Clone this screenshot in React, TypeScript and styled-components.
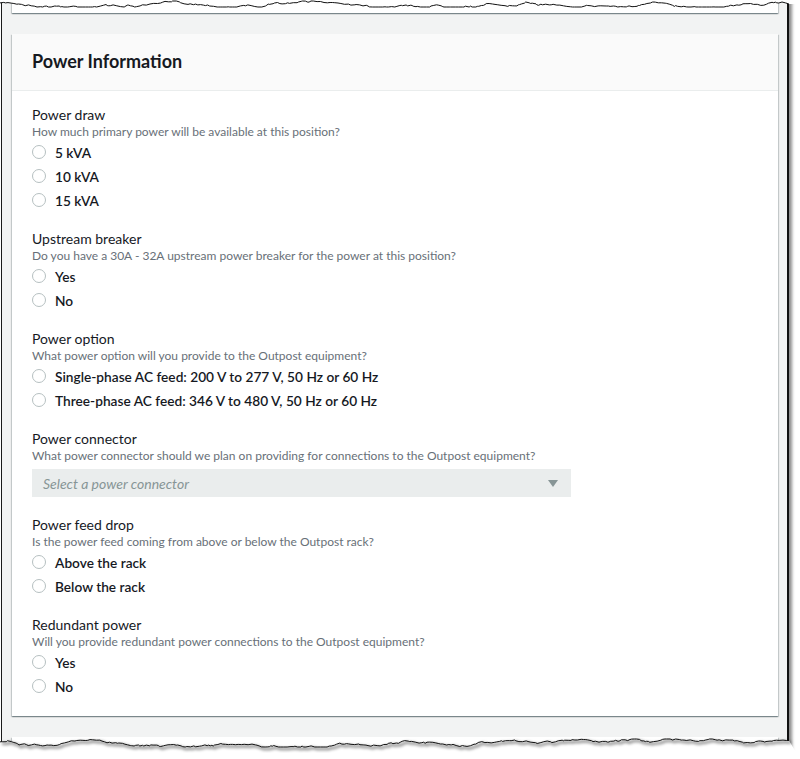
import React from 'react';
import styled, { createGlobalStyle } from 'styled-components';

const GlobalStyle = createGlobalStyle`
  html, body {
    margin: 0;
    padding: 0;
    background: #ffffff;
  }
  body {
    font-family: Lato, 'Open Sans', 'Liberation Sans', sans-serif;
    color: #16191f;
  }
`;

const Shell = styled.div`
  position: relative;
  width: 800px;
  height: 759px;
  overflow: hidden;
  background: #ffffff;
`;

const Sheet = styled.div`
  box-sizing: border-box;
  width: 788px;
  height: 759px;
  margin-left: 1px;
  padding: 0 9px 0 10px;
  background: #f2f3f3;
  border-left: 1px solid #1a1a1a;
  border-right: 2px solid #111111;
  box-shadow: 3px 0 3px rgba(0, 0, 0, 0.45);
`;

const PrevCard = styled.div`
  height: 13px;
  background: #ffffff;
  box-shadow: 0 1px 1px 0 rgba(0, 28, 36, 0.3), 1px 1px 1px 0 rgba(0, 28, 36, 0.15),
    -1px 1px 1px 0 rgba(0, 28, 36, 0.15);
`;

const Card = styled.section`
  margin-top: 21px;
  background: #ffffff;
  box-shadow: 0 1px 1px 0 rgba(0, 28, 36, 0.3), 1px 1px 1px 0 rgba(0, 28, 36, 0.15),
    -1px 1px 1px 0 rgba(0, 28, 36, 0.15);
`;

const NextCard = styled(Card)`
  margin-top: 21px;
  height: 40px;
`;

const CardHeader = styled.header`
  height: 56px;
  display: flex;
  align-items: center;
  padding: 0 20px;
  background: #fafafa;
  border-bottom: 1px solid #eaeded;
`;

const Title = styled.h2`
  margin: 0 0 2px;
  font-size: 18px;
  font-weight: 700;
  color: #16191f;
`;

const CardBody = styled.div`
  display: flex;
  flex-direction: column;
  gap: 18px;
  padding: 15px 20px 18px;
`;

const Field = styled.div`
  display: flex;
  flex-direction: column;
`;

const Label = styled.div`
  font-size: 14px;
  line-height: 18px;
  color: #16191f;
`;

const Description = styled.div`
  font-size: 12px;
  line-height: 16px;
  color: #687078;
`;

const Options = styled.div`
  display: flex;
  flex-direction: column;
`;

const Option = styled.label`
  height: 24px;
  display: flex;
  align-items: center;
  gap: 9px;
  font-size: 13.7px;
  font-weight: 600;
  color: #16191f;
`;

const Radio = styled.span`
  box-sizing: border-box;
  width: 14px;
  height: 14px;
  border-radius: 50%;
  border: 1px solid #b6c0c1;
  background: #ffffff;
`;

const Select = styled.div`
  box-sizing: border-box;
  margin: 5px 0 1px;
  width: 539px;
  height: 28px;
  display: flex;
  align-items: center;
  justify-content: space-between;
  padding: 0 12px 0 10px;
  background: #eaeded;
  border: 1px solid #eaeded;
`;

const Placeholder = styled.span`
  font-size: 14px;
  font-style: italic;
  color: #879596;
`;

const Caret = styled.span`
  width: 0;
  height: 0;
  border-left: 5px solid transparent;
  border-right: 5px solid transparent;
  border-top: 7px solid #879596;
`;

const Edge = styled.svg<{ $bottom?: boolean }>`
  position: absolute;
  left: 0;
  ${(p) => (p.$bottom ? 'bottom: 0;' : 'top: 0;')}
  width: 800px;
  height: ${(p) => (p.$bottom ? '26px' : '12px')};
`;

type Section = {
  label: string;
  description: string;
  options?: string[];
  select?: string;
};

const sections: Section[] = [
  {
    label: 'Power draw',
    description: 'How much primary power will be available at this position?',
    options: ['5 kVA', '10 kVA', '15 kVA'],
  },
  {
    label: 'Upstream breaker',
    description: 'Do you have a 30A - 32A upstream power breaker for the power at this position?',
    options: ['Yes', 'No'],
  },
  {
    label: 'Power option',
    description: 'What power option will you provide to the Outpost equipment?',
    options: [
      'Single-phase AC feed: 200 V to 277 V, 50 Hz or 60 Hz',
      'Three-phase AC feed: 346 V to 480 V, 50 Hz or 60 Hz',
    ],
  },
  {
    label: 'Power connector',
    description: 'What power connector should we plan on providing for connections to the Outpost equipment?',
    select: 'Select a power connector',
  },
  {
    label: 'Power feed drop',
    description: 'Is the power feed coming from above or below the Outpost rack?',
    options: ['Above the rack', 'Below the rack'],
  },
  {
    label: 'Redundant power',
    description: 'Will you provide redundant power connections to the Outpost equipment?',
    options: ['Yes', 'No'],
  },
];

// jagged line for the torn paper edges
const tornLine = (seed: number, base: number, range: number, end: number) => {
  let s = seed;
  const rnd = () => {
    s = (s * 16807) % 2147483647;
    return s / 2147483647;
  };
  const pts: string[] = [];
  let y = base;
  let x = 0;
  while (x < end) {
    y += (rnd() - 0.5) * 2.2;
    if (y < base - range) y = base - range;
    if (y > base + range) y = base + range;
    pts.push(`${x.toFixed(1)},${y.toFixed(1)}`);
    x += 1 + rnd() * 3;
  }
  pts.push(`${end},${y.toFixed(1)}`);
  return pts;
};

const topPts = tornLine(7, 4, 3, 789);
const bottomPts = tornLine(31, 10, 4, 789);

const App: React.FC = () => {
  return (
    <Shell>
      <GlobalStyle />
      <Sheet>
        <PrevCard />
        <Card>
          <CardHeader>
            <Title>Power Information</Title>
          </CardHeader>
          <CardBody>
            {sections.map((section) => (
              <Field key={section.label}>
                <Label>{section.label}</Label>
                <Description>{section.description}</Description>
                {section.options && (
                  <Options>
                    {section.options.map((opt) => (
                      <Option key={opt}>
                        <Radio />
                        {opt}
                      </Option>
                    ))}
                  </Options>
                )}
                {section.select && (
                  <Select>
                    <Placeholder>{section.select}</Placeholder>
                    <Caret />
                  </Select>
                )}
              </Field>
            ))}
          </CardBody>
        </Card>
        <NextCard />
      </Sheet>

      <Edge viewBox="0 0 800 12">
        <path d={`M0,0 L${topPts.join(' L')} L800,${topPts[topPts.length - 1].split(',')[1]} L800,0 Z`} fill="#ffffff" />
        <polyline points={topPts.join(' ')} fill="none" stroke="#111111" strokeWidth="1" />
      </Edge>

      <Edge $bottom viewBox="0 0 800 26">
        <defs>
          <filter id="tornShadow" x="-5%" y="-50%" width="110%" height="200%">
            <feGaussianBlur stdDeviation="1.4" />
          </filter>
        </defs>
        <path d={`M0,26 L${bottomPts.join(' L')} L800,26 Z`} fill="#ffffff" />
        <polyline
          points={bottomPts.join(' ')}
          transform="translate(2,2)"
          fill="none"
          stroke="rgba(0,0,0,0.45)"
          strokeWidth="2.5"
          filter="url(#tornShadow)"
        />
        <polyline points={bottomPts.join(' ')} fill="none" stroke="#111111" strokeWidth="1" />
      </Edge>
    </Shell>
  );
};

export default App;
